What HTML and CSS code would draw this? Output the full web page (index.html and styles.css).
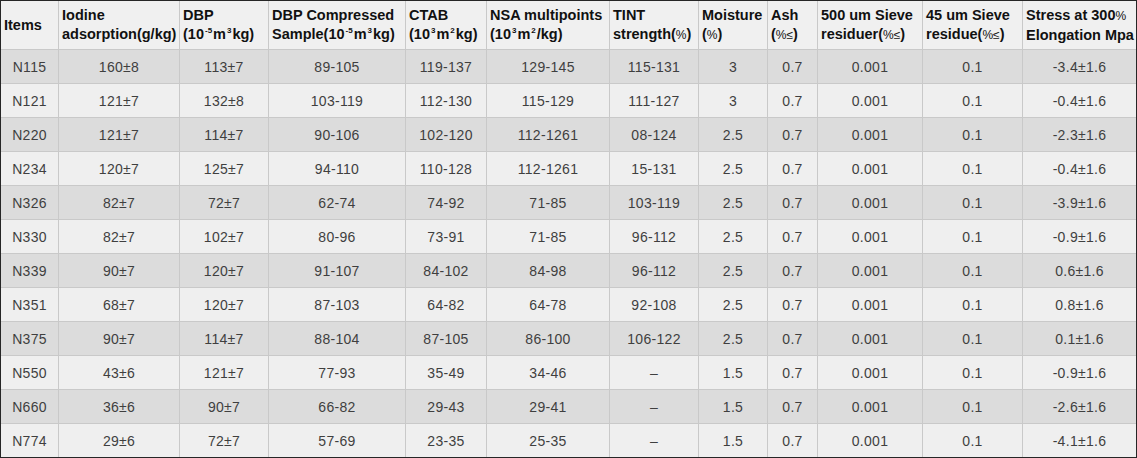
FILE: index.html
```html
<!DOCTYPE html>
<html>
<head>
<meta charset="utf-8">
<link rel="stylesheet" href="styles.css">
</head>
<body>
<table class="specs">
  <colgroup>
    <col class="w1"><col class="w2"><col class="w3"><col class="w4"><col class="w5"><col class="w6">
    <col class="w7"><col class="w8"><col class="w9"><col class="w10"><col class="w11"><col class="w12">
  </colgroup>
  <thead>
    <tr>
      <th>Items</th>
      <th>Iodine adsorption(g/kg)</th>
      <th>DBP<br>(10<sup>-5</sup>m<sup>3</sup>kg)</th>
      <th>DBP Compressed Sample(10<sup>-5</sup>m<sup>3</sup>kg)</th>
      <th>CTAB<br>(10<sup>3</sup>m<sup>2</sup>kg)</th>
      <th>NSA multipoints (10<sup>3</sup>m<sup>2</sup>/kg)</th>
      <th>TINT<br>strength(<span class="pct">%</span>)</th>
      <th>Moisture<br>(<span class="pct">%</span>)</th>
      <th>Ash<br>(<span class="pct">%≤</span>)</th>
      <th>500 um Sieve residuer(<span class="pct">%≤</span>)</th>
      <th>45 um Sieve residue(<span class="pct">%≤</span>)</th>
      <th>Stress at 300<span class="pct">%</span> Elongation Mpa</th>
    </tr>
  </thead>
  <tbody>
    <tr class="dark"><td>N115</td><td>160±8</td><td>113±7</td><td>89-105</td><td>119-137</td><td>129-145</td><td>115-131</td><td>3</td><td>0.7</td><td>0.001</td><td>0.1</td><td>-3.4±1.6</td></tr>
    <tr class="light"><td>N121</td><td>121±7</td><td>132±8</td><td>103-119</td><td>112-130</td><td>115-129</td><td>111-127</td><td>3</td><td>0.7</td><td>0.001</td><td>0.1</td><td>-0.4±1.6</td></tr>
    <tr class="dark"><td>N220</td><td>121±7</td><td>114±7</td><td>90-106</td><td>102-120</td><td>112-1261</td><td>08-124</td><td>2.5</td><td>0.7</td><td>0.001</td><td>0.1</td><td>-2.3±1.6</td></tr>
    <tr class="light"><td>N234</td><td>120±7</td><td>125±7</td><td>94-110</td><td>110-128</td><td>112-1261</td><td>15-131</td><td>2.5</td><td>0.7</td><td>0.001</td><td>0.1</td><td>-0.4±1.6</td></tr>
    <tr class="dark"><td>N326</td><td>82±7</td><td>72±7</td><td>62-74</td><td>74-92</td><td>71-85</td><td>103-119</td><td>2.5</td><td>0.7</td><td>0.001</td><td>0.1</td><td>-3.9±1.6</td></tr>
    <tr class="light"><td>N330</td><td>82±7</td><td>102±7</td><td>80-96</td><td>73-91</td><td>71-85</td><td>96-112</td><td>2.5</td><td>0.7</td><td>0.001</td><td>0.1</td><td>-0.9±1.6</td></tr>
    <tr class="dark"><td>N339</td><td>90±7</td><td>120±7</td><td>91-107</td><td>84-102</td><td>84-98</td><td>96-112</td><td>2.5</td><td>0.7</td><td>0.001</td><td>0.1</td><td>0.6±1.6</td></tr>
    <tr class="light"><td>N351</td><td>68±7</td><td>120±7</td><td>87-103</td><td>64-82</td><td>64-78</td><td>92-108</td><td>2.5</td><td>0.7</td><td>0.001</td><td>0.1</td><td>0.8±1.6</td></tr>
    <tr class="dark"><td>N375</td><td>90±7</td><td>114±7</td><td>88-104</td><td>87-105</td><td>86-100</td><td>106-122</td><td>2.5</td><td>0.7</td><td>0.001</td><td>0.1</td><td>0.1±1.6</td></tr>
    <tr class="light"><td>N550</td><td>43±6</td><td>121±7</td><td>77-93</td><td>35-49</td><td>34-46</td><td>–</td><td>1.5</td><td>0.7</td><td>0.001</td><td>0.1</td><td>-0.9±1.6</td></tr>
    <tr class="dark"><td>N660</td><td>36±6</td><td>90±7</td><td>66-82</td><td>29-43</td><td>29-41</td><td>–</td><td>1.5</td><td>0.7</td><td>0.001</td><td>0.1</td><td>-2.6±1.6</td></tr>
    <tr class="light"><td>N774</td><td>29±6</td><td>72±7</td><td>57-69</td><td>23-35</td><td>25-35</td><td>–</td><td>1.5</td><td>0.7</td><td>0.001</td><td>0.1</td><td>-4.1±1.6</td></tr>
  </tbody>
</table>
</body>
</html>
```
FILE: styles.css
```css
html, body {
  margin: 0;
  padding: 0;
  background: #ffffff;
}

.specs {
  width: 1137px;
  table-layout: fixed;
  border-collapse: separate;
  border-spacing: 0;
  border: 1px solid #262626;
  font-family: "Liberation Sans", Arial, sans-serif;
}

.w1 { width: 58px; }
.w2 { width: 121px; }
.w3 { width: 89px; }
.w4 { width: 137px; }
.w5 { width: 81px; }
.w6 { width: 123px; }
.w7 { width: 89px; }
.w8 { width: 69px; }
.w9 { width: 50px; }
.w10 { width: 105px; }
.w11 { width: 100px; }
.w12 { width: 113px; }

.specs th,
.specs td {
  box-sizing: border-box;
  border-right: 1px solid #c9c9c9;
  border-bottom: 1px solid #c9c9c9;
  padding: 0;
}

.specs th:last-child,
.specs td:last-child {
  border-right: none;
}

.specs tbody tr:last-child td {
  border-bottom: none;
}

.specs th {
  height: 49px;
  background: #f0f0f0;
  color: #111111;
  font-size: 14.5px;
  font-weight: bold;
  line-height: 19px;
  text-align: left;
  vertical-align: middle;
  padding: 0 1px 0 3px;
  white-space: normal;
}

.specs sup {
  display: inline-block;
  font-size: 8px;
  line-height: 8px;
  vertical-align: 6px;
  margin: 0 1px;
}

.pct {
  font-weight: normal;
  font-size: 12px;
}

.specs td {
  height: 34px;
  color: #3f3f3f;
  font-size: 14px;
  letter-spacing: 0.3px;
  text-align: center;
  vertical-align: middle;
}

.specs tbody tr:last-child td {
  height: 33px;
}

.dark td { background: #dcdcdc; }
.light td { background: #efefef; }
```
